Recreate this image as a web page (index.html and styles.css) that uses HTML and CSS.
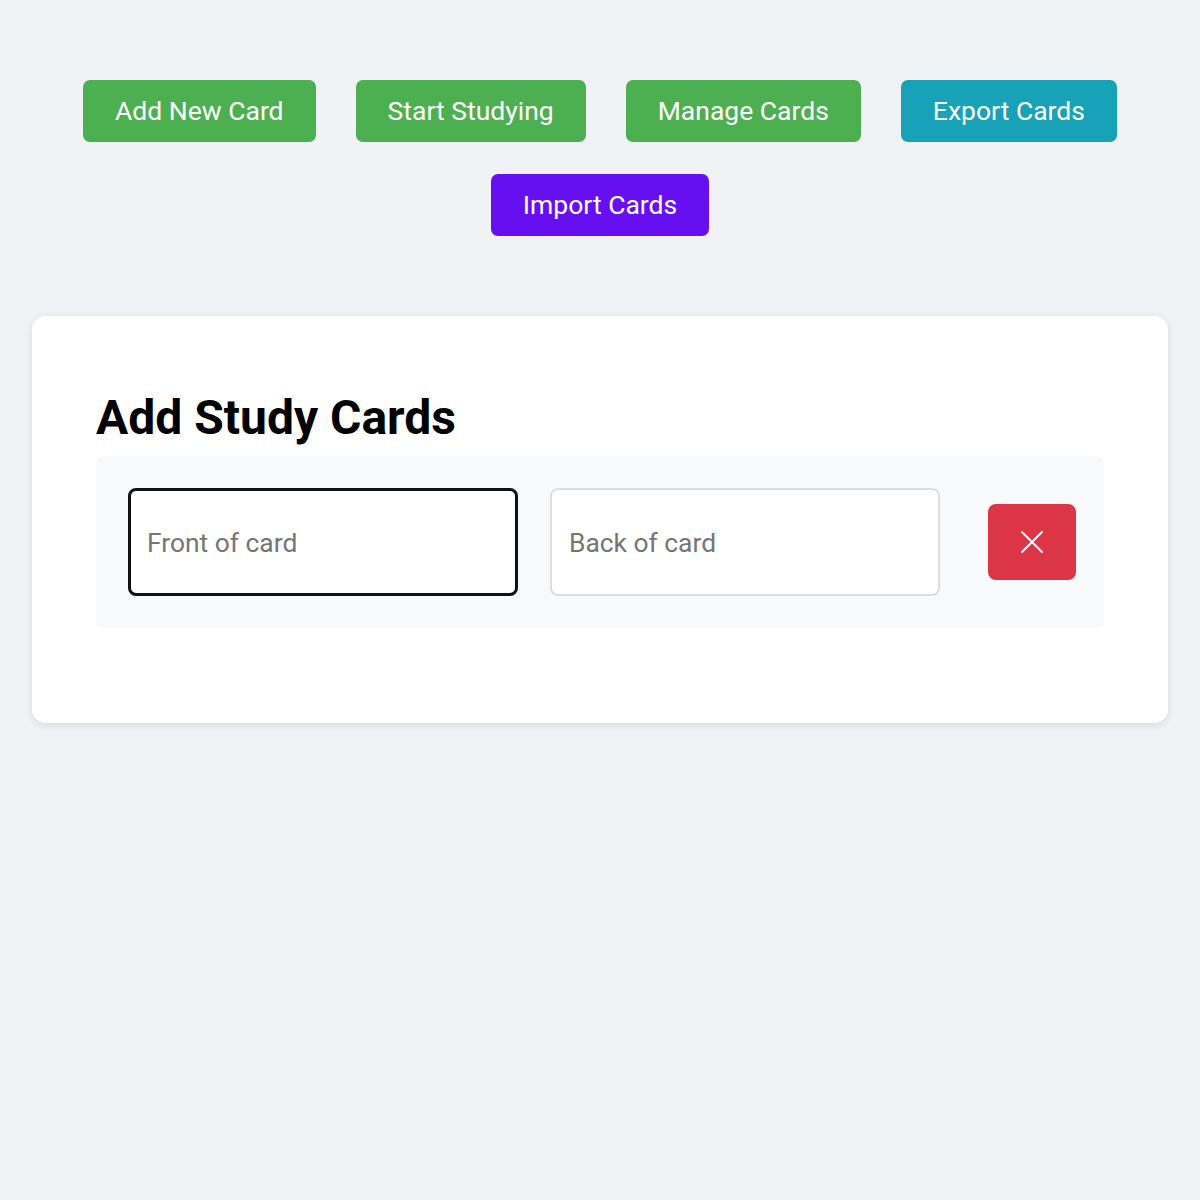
FILE: index.html
```html
<!DOCTYPE html>
<html lang="en">
<head>
    <meta charset="UTF-8">
    <meta name="viewport" content="width=device-width, initial-scale=1.0">
    <title>Study Cards</title>
    <link rel="stylesheet" href="styles.css">
</head>
<body>
    <div class="toolbar">
        <button type="button" class="btn btn-green">Add New Card</button>
        <button type="button" class="btn btn-green">Start Studying</button>
        <button type="button" class="btn btn-green">Manage Cards</button>
        <button type="button" class="btn btn-teal">Export Cards</button>
        <button type="button" class="btn btn-purple">Import Cards</button>
    </div>

    <div class="card">
        <h2 class="card-title">Add Study Cards</h2>
        <div class="card-row">
            <input type="text" class="field field-focus" placeholder="Front of card">
            <input type="text" class="field" placeholder="Back of card">
            <button type="button" class="remove-btn" aria-label="Remove">
                <svg width="24" height="24" viewBox="0 0 24 24" fill="none" stroke="#fff" stroke-width="2" stroke-linecap="round">
                    <line x1="2" y1="2" x2="22" y2="22"/>
                    <line x1="22" y1="2" x2="2" y2="22"/>
                </svg>
            </button>
        </div>
    </div>
</body>
</html>
```

FILE: styles.css
```css
body {
    margin: 0;
    padding: 80px 32px 32px;
    background-color: #f0f2f5;
    font-family: Roboto, "Noto Sans", sans-serif;
}

/* Top buttons */
.toolbar {
    display: flex;
    flex-wrap: wrap;
    justify-content: center;
    gap: 32px 40px;
    margin-bottom: 80px;
}

.btn {
    border: none;
    border-radius: 7px;
    padding: 16px 32px;
    font-family: inherit;
    font-size: 26.5px;
    line-height: 30px;
    color: #fff;
    cursor: pointer;
}

.btn-green { background-color: #4caf50; }
.btn-teal { background-color: #17a2b8; }
.btn-purple { background-color: #6610f2; }

/* Card box */
.card {
    background-color: #fff;
    border-radius: 14px;
    box-shadow: 0 2px 8px rgba(0,0,0,0.1);
    padding: 64px 64px 95px;
}

.card-title {
    margin: 10px 0 10px;
    font-size: 48px;
    line-height: 56px;
    font-weight: 700;
    color: #000;
}

.card-row {
    display: flex;
    align-items: center;
    gap: 32px;
    padding: 32px;
    background-color: #f8f9fa;
    border-radius: 8px;
}

.field {
    flex-shrink: 0;
    width: 390px;
    height: 108px;
    box-sizing: border-box;
    border: 2px solid #ddd;
    border-radius: 8px;
    padding: 2px 17px 0;
    font-family: inherit;
    font-size: 26.4px;
    color: #222;
    background-color: #fff;
}

.field::placeholder {
    color: #757575;
}

.field-focus {
    border: 3px solid #111;
    padding: 2px 16px 0;
}

.remove-btn {
    flex-shrink: 0;
    display: flex;
    align-items: center;
    justify-content: center;
    width: 88px;
    height: 76px;
    margin-left: 16px;
    border: none;
    border-radius: 8px;
    background-color: #dc3545;
    cursor: pointer;
}
```
